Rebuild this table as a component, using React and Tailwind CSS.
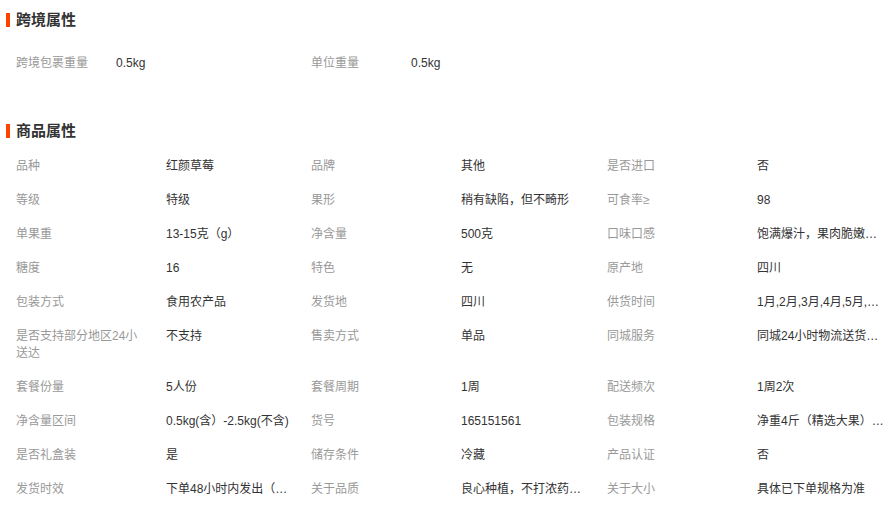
const crossBorder = [
  ["跨境包裹重量", "0.5kg"],
  ["单位重量", "0.5kg"],
];

const attrs = [
  ["品种", "红颜草莓"],
  ["品牌", "其他"],
  ["是否进口", "否"],
  ["等级", "特级"],
  ["果形", "稍有缺陷，但不畸形"],
  ["可食率≥", "98"],
  ["单果重", "13-15克（g）"],
  ["净含量", "500克"],
  ["口味口感", "饱满爆汁，果肉脆嫩多汁"],
  ["糖度", "16"],
  ["特色", "无"],
  ["原产地", "四川"],
  ["包装方式", "食用农产品"],
  ["发货地", "四川"],
  ["供货时间", "1月,2月,3月,4月,5月,6月,7月,8月,9月,10月,11月,12月"],
  ["是否支持部分地区24小送达", "不支持"],
  ["售卖方式", "单品"],
  ["同城服务", "同城24小时物流送货上门"],
  ["套餐份量", "5人份"],
  ["套餐周期", "1周"],
  ["配送频次", "1周2次"],
  ["净含量区间", "0.5kg(含）-2.5kg(不含)"],
  ["货号", "165151561"],
  ["包装规格", "净重4斤（精选大果）约40-50颗"],
  ["是否礼盒装", "是"],
  ["储存条件", "冷藏"],
  ["产品认证", "否"],
  ["发货时效", "下单48小时内发出（节假日除外）"],
  ["关于品质", "良心种植，不打浓药，放心食用"],
  ["关于大小", "具体已下单规格为准"],
];

function Title({ children, className = "" }) {
  return (
    <div className={`flex items-center h-9 ${className}`}>
      <span className="ml-[6px] w-[4px] h-[14px] bg-[#ff4400]" />
      <h3 className="ml-[6px] text-[15px] font-bold text-[#333]">{children}</h3>
    </div>
  );
}

function Item({ label, value, labelW = "w-[150px]" }) {
  return (
    <div className="flex pt-[9px] pb-[8px] leading-[17px]">
      <span className={`${labelW} shrink-0 pr-[20px] text-[#999]`}>{label}</span>
      <span className="w-[128px] truncate text-[#333]">{value}</span>
    </div>
  );
}

export default function App() {
  return (
    <div
      className="w-[891px] h-[511px] bg-white text-[12px] overflow-hidden"
      style={{ fontFamily: '"Liberation Sans", "Noto Sans CJK SC", sans-serif' }}
    >
      <Title className="mt-[2px]">跨境属性</Title>
      <div className="grid grid-cols-[295px_296px_1fr] pl-4 pt-[8px]">
        {crossBorder.map(([l, v]) => (
          <Item key={l} label={l} value={v} labelW="w-[100px]" />
        ))}
      </div>

      <Title className="mt-[33px]">商品属性</Title>
      <div className="grid grid-cols-[295px_296px_1fr] pl-4">
        {attrs.map(([l, v]) => (
          <Item key={l} label={l} value={v} />
        ))}
      </div>
    </div>
  );
}
